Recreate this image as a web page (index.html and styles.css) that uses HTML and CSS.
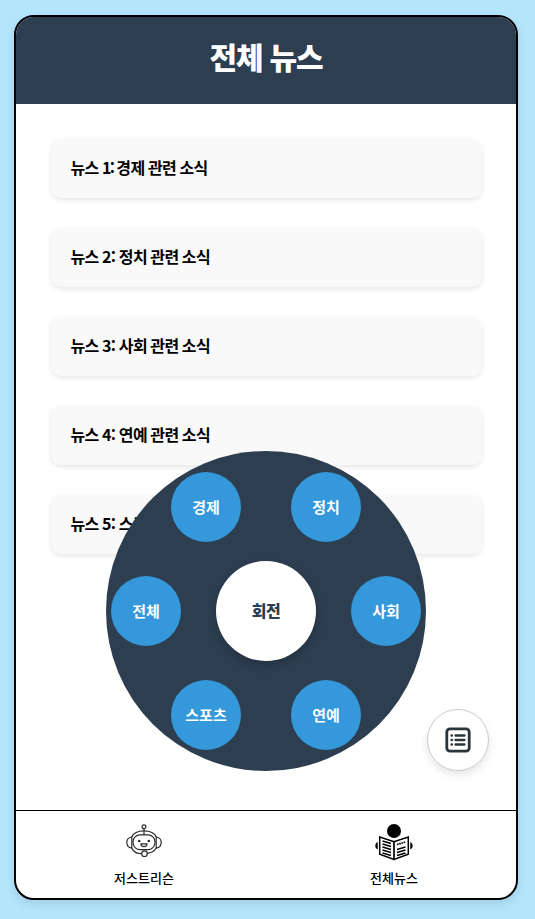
FILE: index.html
```html
<!DOCTYPE html>
<html lang="ko">
<head>
<meta charset="utf-8">
<title>전체 뉴스</title>
<link rel="stylesheet" href="styles.css">
</head>
<body>
<div class="phone">
  <header class="header"><h1>전체 뉴스</h1></header>
  <main class="news">
    <article class="card"><p>뉴스 <span class="narrow">1:</span> 경제 관련 소식</p></article>
    <article class="card"><p>뉴스 2: 정치 관련 소식</p></article>
    <article class="card"><p>뉴스 3: 사회 관련 소식</p></article>
    <article class="card"><p>뉴스 4: 연예 관련 소식</p></article>
    <article class="card"><p>뉴스 5: 스포츠 관련 소식</p></article>
  </main>
  <div class="wheel">
    <span class="item economy">경제</span>
    <span class="item politics">정치</span>
    <span class="item society">사회</span>
    <span class="item entertainment">연예</span>
    <span class="item sports">스포츠</span>
    <span class="item all">전체</span>
    <span class="hub">회전</span>
  </div>
  <button class="fab" aria-label="목록">
    <svg width="26" height="26" viewBox="0 0 26 26" fill="none" stroke="#2b353b">
      <rect x="1.8" y="1.8" width="22.4" height="22.4" rx="3.2" stroke-width="2.8"/>
      <path d="M10.5 8.5h9M10.5 13h9M10.5 17.5h9" stroke-width="2.3" stroke-linecap="round"/>
      <path d="M6.7 8.5h.1M6.7 13h.1M6.7 17.5h.1" stroke-width="2.6" stroke-linecap="round"/>
    </svg>
  </button>
  <nav class="nav">
    <a class="tab">
      <svg width="40" height="40" viewBox="0 0 40 40" fill="none" stroke="#2a2a2a" stroke-width="1.2">
        <circle cx="20" cy="4.800" r="1.900"/>
        <path d="M20 6.700V13"/>
        <path d="M7.500 15C9.500 11 14 8.800 20 8.800S30.500 11 32.500 15"/>
        <rect x="9" y="12.800" width="22" height="14.800" rx="7"/>
        <path d="M7.800 15c-3 .4-5 2.700-5 5.600s2 5.200 5 5.600zM32.200 15c3 .4 5 2.700 5 5.600s-2 5.200-5 5.600z"/>
        <path d="M7.800 26.200C9.500 29.800 13 31.700 17.500 31.700M32.200 26.200C30.500 29 27.500 30.800 23 31.300"/>
        <circle cx="20.500" cy="31.700" r="2.800" fill="#fff"/>
        <circle cx="15.200" cy="19" r="1.300" fill="#2a2a2a" stroke="none"/>
        <circle cx="24.800" cy="19" r="1.300" fill="#2a2a2a" stroke="none"/>
        <path d="M17 21.800h6c0 3.800-6 3.800-6 0z"/>
      </svg>
      <span>저스트리슨</span>
    </a>
    <a class="tab">
      <svg width="40" height="40" viewBox="0 0 40 40">
        <circle cx="20" cy="9" r="7" fill="#000"/>
        <path d="M3.700 20c-3.200 1.500-3.200 6 0 7.500zM36.300 20c3.200 1.500 3.200 6 0 7.500z" fill="#000"/>
        <path d="M5.700 15L20 19.800 34.300 15v17.300L20 37.500 5.700 32.300z" fill="#fff" stroke="#000" stroke-width="1.500"/>
        <path d="M20 19.500v17.500" stroke="#000" stroke-width="1.700"/>
        <path d="M8.500 19l8.500 2.500M8.500 22l8.500 2.500M8.500 25l8.500 2.500M8.500 28l8.500 2.500M8.500 31l8.500 2.500M23 27.500l8.500-2.500M23 30.500l8.500-2.500M23 33.500l8.500-2.500" stroke="#000" stroke-width="1.400"/>
        <path d="M23 22.500l8.500-2.500" stroke="#000" stroke-width="1.700" stroke-dasharray="1.600 .7"/>
      </svg>
      <span>전체뉴스</span>
    </a>
  </nav>
</div>
</body>
</html>
```
FILE: styles.css
```css
* { box-sizing: border-box; }

body {
  margin: 0;
  height: 919px;
  padding: 15px 17px 19px 14px;
  background: #b3e5fc;
  font-family: "Noto Sans CJK KR", sans-serif;
  overflow: hidden;
}

.phone {
  position: relative;
  display: flex;
  flex-direction: column;
  width: 504px;
  height: 885px;
  border: 2px solid #000;
  border-radius: 20px;
  background: #fff;
  overflow: hidden;
  box-shadow: 0 4px 10px rgba(0, 0, 0, .1);
}

.header {
  display: flex;
  flex: none;
  align-items: center;
  justify-content: center;
  height: 87px;
  padding-bottom: 9px;
  background: #2c3e50;
  color: #fff;
}

h1 {
  margin: 0;
  font-size: 30px;
  font-weight: 900;
  letter-spacing: -1.2px;
  line-height: 40px;
}

.news {
  display: flex;
  flex: 1;
  flex-direction: column;
  gap: 30px;
  padding: 35px 34px 0 35px;
}

.card {
  display: flex;
  align-items: center;
  height: 59px;
  padding: 0 20px 4px 19.5px;
  border-radius: 10px;
  background: #f9f9f9;
  box-shadow: 0 2px 5px rgba(0, 0, 0, .1);
  color: #000;
  font-size: 16px;
  font-weight: 700;
  letter-spacing: -.6px;
  word-spacing: -.6px;
}

.card p { margin: 0; }

.narrow { letter-spacing: -1.8px; }

.wheel {
  position: absolute;
  left: 90px;
  top: 434px;
  width: 320px;
  height: 320px;
  border-radius: 50%;
  background: #2c3e50;
}

.item, .hub {
  position: absolute;
  display: flex;
  align-items: center;
  justify-content: center;
  border-radius: 50%;
}

.item {
  width: 70px;
  height: 70px;
  padding-bottom: 2px;
  background: #3498db;
  color: #fff;
  font-size: 15px;
  font-weight: 700;
}

.economy { left: 65px; top: 21px; }
.politics { left: 185px; top: 21px; }
.society { left: 245px; top: 125px; }
.entertainment { left: 185px; top: 229px; }
.sports { left: 65px; top: 229px; }
.all { left: 5px; top: 125px; }

.hub {
  left: 110px;
  top: 110px;
  width: 100px;
  height: 100px;
  padding-bottom: 2px;
  background: #fff;
  box-shadow: 0 4px 8px rgba(0, 0, 0, .2);
  color: #2c3e50;
  font-size: 16px;
  font-weight: 900;
  letter-spacing: -.5px;
}

.fab {
  position: absolute;
  left: 411px;
  top: 692px;
  display: flex;
  align-items: center;
  justify-content: center;
  width: 62px;
  height: 62px;
  padding: 0;
  border: 1px solid #ccc;
  border-radius: 50%;
  background: #fff;
  box-shadow: 0 4px 8px rgba(0, 0, 0, .1);
}

.nav {
  display: flex;
  flex: none;
  height: 88px;
  border-top: 1px solid #000;
}

.tab {
  display: flex;
  flex: 1;
  flex-direction: column;
  align-items: center;
  gap: 7px;
  padding-top: 11px;
  padding-left: 6px;
  color: #000;
  font-size: 13px;
  font-weight: 500;
  line-height: 18px;
}
```
